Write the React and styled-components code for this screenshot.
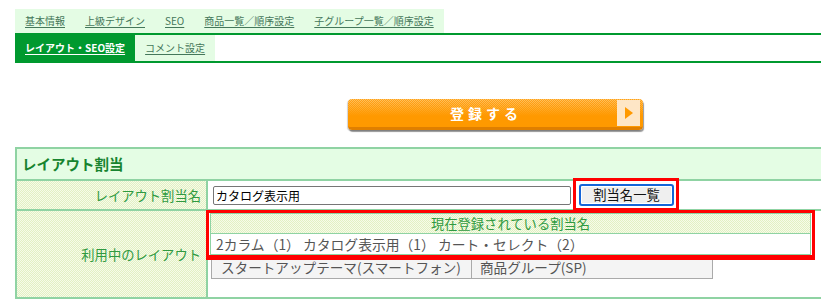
import React from 'react';
import styled, { createGlobalStyle } from 'styled-components';

const GlobalStyle = createGlobalStyle`
  html, body {
    margin: 0;
    padding: 0;
    overflow: hidden;
    background: #fff;
  }
  body {
    font-family: "Noto Sans CJK JP", "Noto Sans", sans-serif;
  }
`;

const checker = `repeating-conic-gradient(#e2f0c3 0% 25%, #f6fbe9 0% 50%) 0 0 / 2px 2px`;

const Page = styled.div`
  width: 960px;
  padding: 9px 0 0 15px;
`;

const TopTabs = styled.div`
  display: flex;
  width: max-content;
  height: 24px;
  background: #e4fce4;
`;

const SubTabs = styled.div`
  display: flex;
  height: 26px;
  border-top: 2px solid #00992f;
  border-bottom: 2px solid #00992f;
`;

const Tab = styled.a`
  display: block;
  padding: 0 10px;
  font-size: 10px;
  line-height: ${p => p.$tall ? '26px' : '24px'};
  color: ${p => p.$active ? '#fff' : '#44775a'};
  background: ${p => p.$active ? '#00992f' : p.$tall ? '#e4fce4' : 'transparent'};
  font-weight: ${p => p.$active ? 'bold' : 'normal'};
  text-decoration: underline;
  text-underline-offset: 2px;
  cursor: pointer;
`;

const SubmitArea = styled.div`
  display: flex;
  justify-content: center;
  padding-top: 36px;
`;

const SubmitButton = styled.button`
  display: flex;
  align-items: center;
  width: 295px;
  height: 31px;
  padding: 0 3px 0 0;
  border: none;
  border-bottom: 3px solid #e07f00;
  border-radius: 4px;
  background:
    linear-gradient(to bottom, rgba(255, 153, 0, 0) 0%, #ff9900 60%),
    repeating-conic-gradient(#ffc565 0% 25%, #ffa01a 0% 50%) 0 0 / 2px 2px;
  box-shadow: 1px 2px 1px rgba(0, 0, 0, 0.4), -1px 1px 1px rgba(0, 0, 0, 0.18);
  cursor: pointer;
`;

const SubmitLabel = styled.span`
  flex: 1;
  padding-left: 8px;
  text-align: center;
  color: #fff;
  font-family: "Noto Sans CJK JP", sans-serif;
  font-size: 14px;
  font-weight: bold;
  letter-spacing: 4px;
`;

const ArrowBox = styled.span`
  display: flex;
  align-items: center;
  justify-content: center;
  width: 23px;
  height: 26px;
  background: #fee6c6;

  &::after {
    content: '';
    border-left: 8px solid #ff9900;
    border-top: 6px solid transparent;
    border-bottom: 6px solid transparent;
    margin-left: 2px;
  }
`;

const Panel = styled.div`
  margin-top: 17px;
  border: 2px solid #8fd3a3;
  border-right: none;
`;

const PanelTitle = styled.div`
  height: 30px;
  padding-left: 5px;
  background: #e4fde4;
  border-bottom: 2px solid #8fd3a3;
  color: #17842f;
  font-size: 14.5px;
  font-weight: bold;
  line-height: 30px;
`;

const Row = styled.div`
  display: grid;
  grid-template-columns: 191px 1fr;
  height: ${p => p.$h}px;
  border-bottom: ${p => p.$last ? 'none' : '2px solid #8fd3a3'};
`;

const Label = styled.div`
  display: flex;
  align-items: center;
  justify-content: flex-end;
  padding-right: 5px;
  background: ${checker};
  border-right: 2px solid #8fd3a3;
  color: #2f9a40;
  font-size: 13.3px;
`;

const Cell = styled.div`
  position: relative;
  display: flex;
  align-items: ${p => p.$top ? 'flex-start' : 'center'};
  padding: ${p => p.$top ? '42px 0 0 3px' : '0 0 0 5px'};
`;

const TextInput = styled.input`
  width: 358px;
  height: 19px;
  box-sizing: border-box;
  padding: 0 2px;
  border: 1px solid #767676;
  border-radius: 2px;
  font-family: "Noto Sans CJK JP", sans-serif;
  font-size: 12px;
  color: #000;
`;

const Marked = styled.span`
  position: relative;
  display: inline-flex;
  margin-left: 8px;

  &::after {
    content: '';
    position: absolute;
    inset: -6px -5px -5px -6px;
    border: 3px solid #ff0000;
    pointer-events: none;
  }
`;

const ListButton = styled.button`
  width: 95px;
  height: 22px;
  padding: 0;
  border: 2px solid #1565d8;
  border-radius: 3px;
  background: #efefef;
  font-family: "Noto Sans CJK JP", sans-serif;
  font-size: 13.3px;
  line-height: 18px;
  color: #111;
  box-shadow: inset 0 0 0 1px #fff;
`;

const Popup = styled.div`
  position: absolute;
  left: -2px;
  top: -1px;
  width: 609px;
  box-sizing: border-box;
  padding: 0 1px;
  border: 3px solid #ff0000;
  border-bottom-width: 5px;
  background: #fff;
  z-index: 2;
`;

const PopupTable = styled.div`
  border: 1px solid #8fd3a3;
  font-size: 13.3px;
`;

const PopupHead = styled.div`
  height: 19px;
  line-height: 19px;
  text-align: center;
  background: ${checker};
  border-bottom: 1px solid #8fd3a3;
  color: #2f9a40;
`;

const PopupBody = styled.div`
  height: 20px;
  line-height: 20px;
  padding-left: 5px;
  color: #555;
  font-size: 13.8px;
`;

const LayoutTable = styled.div`
  display: grid;
  grid-template-columns: 259px 241px;
  border: 1px solid #aaa;
  background: #f4f4f4;
`;

const LayoutCell = styled.div`
  height: 24px;
  padding-left: ${p => p.$first ? 9 : 8}px;
  border-left: ${p => p.$first ? 'none' : '1px solid #aaa'};
  color: #555;
  font-size: 13.6px;
  line-height: 26px;
  white-space: nowrap;
`;

const topTabs = ['基本情報', '上級デザイン', 'SEO', '商品一覧／順序設定', '子グループ一覧／順序設定'];
const layouts = ['スタートアップテーマ(スマートフォン)', '商品グループ(SP)'];

export default function App() {
  return (
    <Page>
      <GlobalStyle />
      <TopTabs>
        {topTabs.map(t => <Tab key={t}>{t}</Tab>)}
      </TopTabs>
      <SubTabs>
        <Tab $tall $active>レイアウト・SEO設定</Tab>
        <Tab $tall>コメント設定</Tab>
      </SubTabs>

      <SubmitArea>
        <SubmitButton>
          <SubmitLabel>登録する</SubmitLabel>
          <ArrowBox />
        </SubmitButton>
      </SubmitArea>

      <Panel>
        <PanelTitle>レイアウト割当</PanelTitle>
        <Row $h={28}>
          <Label>レイアウト割当名</Label>
          <Cell>
            <TextInput defaultValue="カタログ表示用" />
            <Marked>
              <ListButton>割当名一覧</ListButton>
            </Marked>
          </Cell>
        </Row>
        <Row $h={86} $last>
          <Label>利用中のレイアウト</Label>
          <Cell $top>
            <Popup>
              <PopupTable>
                <PopupHead>現在登録されている割当名</PopupHead>
                <PopupBody>2カラム（1） カタログ表示用（1） カート・セレクト（2）</PopupBody>
              </PopupTable>
            </Popup>
            <LayoutTable>
              {layouts.map((l, i) => (
                <LayoutCell key={l} $first={i === 0}>{l}</LayoutCell>
              ))}
            </LayoutTable>
          </Cell>
        </Row>
      </Panel>
    </Page>
  );
}
